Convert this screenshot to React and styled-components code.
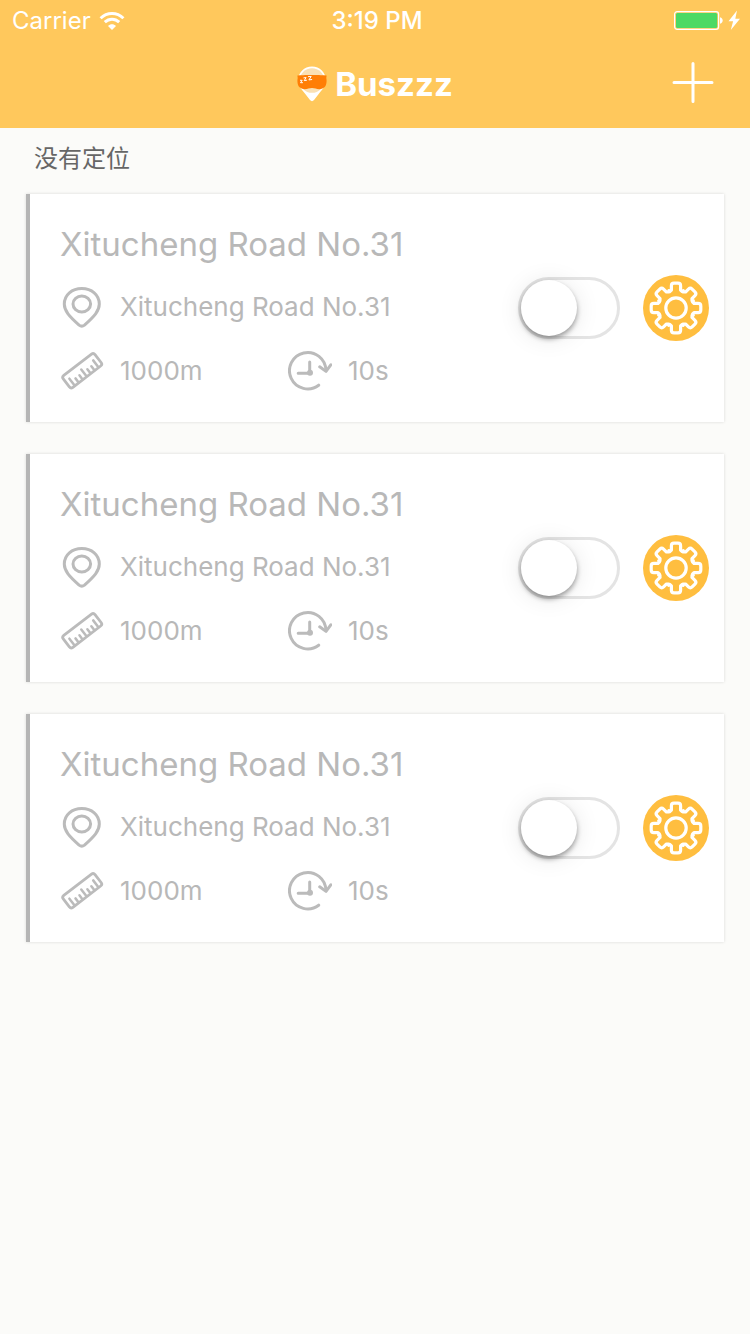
import React, { useState } from 'react';
import styled, { createGlobalStyle } from 'styled-components';

const GlobalStyle = createGlobalStyle`
  * { box-sizing: border-box; }
  body {
    margin: 0;
    background: #fbfbf9;
    font-family: Inter, "Noto Sans CJK SC", sans-serif;
  }
`;

const Page = styled.div`
  min-height: 100vh;
  background: #fbfbf9;
`;

const Header = styled.header`
  background: #ffc85c;
  color: #fff;
`;

const StatusBar = styled.div`
  display: grid;
  grid-template-columns: 1fr auto 1fr;
  align-items: center;
  height: 40px;
  padding: 2px 8px 0 12px;
  font-size: 24px;
  line-height: 30px;
`;

const StatusGroup = styled.div`
  display: flex;
  align-items: center;
  gap: 8px;
  justify-content: ${(p) => (p.$end ? 'flex-end' : 'flex-start')};
`;

const Clock = styled.time`
  font-weight: 500;
`;

const NavBar = styled.div`
  display: grid;
  grid-template-columns: 1fr auto 1fr;
  align-items: center;
  height: 88px;
  padding: 0 35px;
`;

const Brand = styled.h1`
  grid-column: 2;
  display: flex;
  align-items: center;
  gap: 8px;
  margin: 0;
  font-size: 33px;
  line-height: 42px;
  font-weight: 700;
`;

const IconButton = styled.button`
  display: grid;
  place-items: center;
  flex: none;
  width: ${(p) => p.$size}px;
  height: ${(p) => p.$size}px;
  padding: 0;
  border: 0;
  border-radius: 50%;
  background: ${(p) => p.$fill || 'transparent'};
  justify-self: end;
  cursor: pointer;
`;

const LocationStatus = styled.p`
  margin: 0;
  padding: 16px 34px 20px;
  font-size: 24px;
  line-height: 30px;
  color: #666;
`;

const AlarmList = styled.ul`
  display: flex;
  flex-direction: column;
  gap: 32px;
  margin: 0;
  padding: 0 26px 32px;
  list-style: none;
`;

const Card = styled.li`
  display: flex;
  align-items: center;
  gap: 23px;
  padding: 29px 15px 29px 30px;
  border-left: 4px solid #b5b5b5;
  background: #fff;
  box-shadow: 0 0 3px rgba(0, 0, 0, 0.14);
`;

const CardBody = styled.div`
  flex: 1;
  min-width: 0;
`;

const CardTitle = styled.h2`
  margin: 0 0 20px;
  font-size: 33px;
  line-height: 42px;
  font-weight: 400;
  color: #b8b8b8;
`;

const DetailGrid = styled.div`
  display: grid;
  grid-template-columns: 228px 1fr;
  row-gap: 20px;
`;

const Detail = styled.div`
  grid-column: ${(p) => (p.$wide ? '1 / -1' : 'auto')};
  display: flex;
  align-items: center;
  gap: 16px;
  height: 44px;
  font-size: 26px;
  line-height: 32px;
  color: #b8b8b8;
  white-space: nowrap;
`;

const LineIcon = styled.svg`
  flex: none;
  width: 44px;
  height: 44px;
  fill: none;
  stroke: #bbb;
  stroke-width: 3;
  stroke-linecap: round;
  stroke-linejoin: round;
`;

const Switch = styled.input`
  appearance: none;
  flex: none;
  width: 102px;
  height: 62px;
  margin: 0;
  border: 3px solid ${(p) => (p.checked ? '#4cd964' : '#e4e4e4')};
  border-radius: 31px;
  background: ${(p) => (p.checked ? '#4cd964' : '#fff')};
  display: flex;
  justify-content: ${(p) => (p.checked ? 'flex-end' : 'flex-start')};
  cursor: pointer;

  &::before {
    content: '';
    width: 56px;
    height: 56px;
    border-radius: 50%;
    background: #fff;
    box-shadow: 0 3px 5px rgba(0, 0, 0, 0.36), 0 2px 24px rgba(0, 0, 0, 0.1);
  }
`;

const WifiIcon = () => (
  <svg width="26" height="20" viewBox="0 0 26 20" fill="none" stroke="#fff" strokeWidth="3" aria-hidden="true">
    <path d="M1.6 7.2C8 .9 18 .9 24.4 7.2" />
    <path d="M5.8 11.2C10 7.2 16 7.2 20.2 11.2" />
    <path d="M13 19 9 14.9c2.3-2.1 5.700-2.100 8 0Z" fill="#fff" stroke="none" />
  </svg>
);

const BatteryIcon = () => (
  <svg width="68" height="24" viewBox="0 0 68 24" aria-hidden="true">
    <rect x=".6" y="2.600" width="44" height="17.800" rx="2.600" fill="none" stroke="#fff" strokeWidth="1.200" />
    <rect x="2" y="4" width="41.200" height="15" rx="1.500" fill="#4cd964" />
    <path d="M46 8.200c3.600.5 3.600 6 0 6.500Z" fill="#fff" />
    <path d="m63 1.500-8.500 10.800h4.600L56.800 21 66 9.700h-4.700Z" fill="#fff" />
  </svg>
);

const BrandIcon = () => (
  <svg width="30" height="36" viewBox="0 0 30 36" aria-hidden="true">
    <path d="M15 .5C7.200.5 1.200 6.400 1.200 14.200c0 6.300 4.300 10.200 7.300 14L13 34c1.200 1.500 2.800 1.500 4 0l4.500-5.800c3-3.800 7.300-7.700 7.300-14C28.800 6.400 22.800.5 15 .5Z" fill="#fff" />
    <circle cx="15" cy="14.500" r="12.300" fill="#fae0b3" />
    <path d="M.4 9.600C4.500 8.900 25.500 8.900 29.600 9.600l-.3 2.400c.8 4.300-.1 7.800-2.200 9.600-2.700 2.300-6.200 1.900-8.500 1-2.200-.9-5-.9-7.200 0-2.300.9-5.800 1.300-8.500-1C.8 19.800-.1 16.300.7 12Z" fill="#ff7e05" />
    <path d="M3 14.300h2.200L3.500 16.700h2.400M6.500 11.900l2.600-.3-1.900 3 2.700-.4M11 10.700l3.200-.3-2.300 3.500 3.200-.4" fill="none" stroke="#fff" strokeWidth="1" />
  </svg>
);

const PlusIcon = () => (
  <svg width="44" height="44" viewBox="0 0 44 44" stroke="#fff" strokeWidth="3" strokeLinecap="round" aria-hidden="true">
    <path d="M22 1.500v38M3 20.500h38" />
  </svg>
);

const PinIcon = () => (
  <LineIcon viewBox="0 0 44 44" aria-hidden="true">
    <path d="M4.300 19C4.300 9.800 12 3.500 21.800 3.500S39.300 9.800 39.300 19c0 7-4.900 12.200-14.800 21.100q-2.700 2-5.400 0C9.200 31.200 4.300 26 4.300 19Z" />
    <ellipse cx="21.800" cy="19" rx="8.800" ry="7.900" />
  </LineIcon>
);

const RulerIcon = () => (
  <LineIcon viewBox="0 0 44 44" aria-hidden="true">
    <g transform="translate(22.200 21.700) rotate(-37.500)" strokeWidth="2.800">
      <rect x="-20" y="-7.500" width="40" height="15" rx="2.500" />
      <path d="M-15 6.500v-8M-10 6.500v-4.500M-5 6.500v-4.500M0 6.500v-8M5 6.500v-4.500M10 6.500v-4.500M15 6.500v-8" strokeWidth="2.500" />
    </g>
  </LineIcon>
);

const TimerIcon = () => (
  <LineIcon viewBox="0 0 44 44" aria-hidden="true">
    <path d="M30.700 36.200A18.200 18.200 0 1 1 37.900 21.500" />
    <path d="m31.700 17.800 6.300 4.600 4.800-6.600" />
    <path d="M21.700 13v11.200H10.200" />
    <circle cx="22" cy="23.800" r="1.500" />
  </LineIcon>
);

const GearIcon = () => (
  <svg width="66" height="66" viewBox="-33 -33 66 66" fill="none" stroke="#fff" strokeWidth="3.200" strokeLinejoin="round" strokeLinecap="round" aria-hidden="true">
    {[0, 45, 90, 135, 180, 225, 270, 315].map((angle) => (
      <path
        key={angle}
        transform={`rotate(${angle})`}
        d="M-6.200-16.500-4.600-18v-4.200q0-2.600 2.600-2.600h4q2.600 0 2.600 2.600V-18l1.600 1.500 1.090-.78"
      />
    ))}
    <circle r="10.200" />
  </svg>
);

const alarms = [1, 2, 3].map((id) => ({
  id,
  title: 'Xitucheng Road No.31',
  address: 'Xitucheng Road No.31',
  distance: '1000m',
  duration: '10s',
}));

function AlarmCard({ alarm }) {
  const [enabled, setEnabled] = useState(false);
  return (
    <Card>
      <CardBody>
        <CardTitle>{alarm.title}</CardTitle>
        <DetailGrid>
          <Detail $wide><PinIcon />{alarm.address}</Detail>
          <Detail><RulerIcon />{alarm.distance}</Detail>
          <Detail><TimerIcon />{alarm.duration}</Detail>
        </DetailGrid>
      </CardBody>
      <Switch
        type="checkbox"
        role="switch"
        aria-label={alarm.title}
        checked={enabled}
        onChange={(e) => setEnabled(e.target.checked)}
      />
      <IconButton type="button" $size={66} $fill="#ffbe3f" aria-label="Settings">
        <GearIcon />
      </IconButton>
    </Card>
  );
}

export default function App() {
  return (
    <Page>
      <GlobalStyle />
      <Header>
        <StatusBar>
          <StatusGroup>Carrier<WifiIcon /></StatusGroup>
          <Clock>3:19 PM</Clock>
          <StatusGroup $end><BatteryIcon /></StatusGroup>
        </StatusBar>
        <NavBar>
          <Brand><BrandIcon />Buszzz</Brand>
          <IconButton type="button" $size={44} aria-label="Add">
            <PlusIcon />
          </IconButton>
        </NavBar>
      </Header>
      <main>
        <LocationStatus lang="zh-CN">没有定位</LocationStatus>
        <AlarmList>
          {alarms.map((alarm) => <AlarmCard key={alarm.id} alarm={alarm} />)}
        </AlarmList>
      </main>
    </Page>
  );
}
